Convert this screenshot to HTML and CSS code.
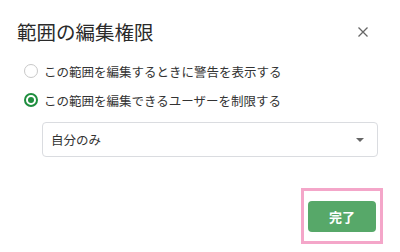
FILE: index.html
```html
<!DOCTYPE html>
<html lang="ja">
<head>
<meta charset="utf-8">
<link rel="stylesheet" href="styles.css">
</head>
<body>
<div class="dialog">
  <div class="header">
    <div class="title">範囲の編集権限</div>
    <svg class="close" width="10" height="10" viewBox="0 0 10 10"><path d="M0.5 0.5L9.5 9.5M9.5 0.5L0.5 9.5" stroke="#666" stroke-width="1.3"/></svg>
  </div>
  <div class="options">
    <label class="option"><span class="radio"></span><span class="label">この範囲を編集するときに警告を表示する</span></label>
    <label class="option"><span class="radio checked"></span><span class="label">この範囲を編集できるユーザーを制限する</span></label>
  </div>
  <div class="select">
    <span class="value">自分のみ</span>
    <span class="caret"></span>
  </div>
  <div class="footer">
    <div class="highlight"><button class="done">完了</button></div>
  </div>
</div>
</body>
</html>
```
FILE: styles.css
```css
html, body { margin: 0; padding: 0; background: #fff; }
body { width: 400px; height: 252px; overflow: hidden; font-family: "Noto Sans CJK JP", "Noto Sans", sans-serif; color: #333; }
.dialog { padding: 0 22px 0 17px; }
.header { display: flex; align-items: center; justify-content: space-between; height: 64px; }
.title { font-size: 19.5px; color: #2a2a2a; line-height: 1; }
.close { margin-right: 10px; }
.options { display: flex; flex-direction: column; gap: 11px; padding-left: 7px; margin-top: -2px; }
.option { display: flex; align-items: center; gap: 6px; font-size: 12.5px; height: 18px; }
.radio { width: 12px; height: 12px; border: 1px solid #c8c8c8; border-radius: 50%; box-sizing: content-box; display: inline-block; position: relative; }
.radio.checked { border: 2px solid #1e8e3e; width: 10px; height: 10px; }
.radio.checked::after { content: ""; position: absolute; left: 2px; top: 2px; width: 6px; height: 6px; border-radius: 50%; background: #1e8e3e; }
.select { margin: 13px 0 0 25px; height: 33px; border: 1px solid #dadce0; border-radius: 4px; display: flex; align-items: center; justify-content: space-between; padding: 0 13px 0 8px; font-size: 12.5px; }
.caret { width: 0; height: 0; border-left: 4px solid transparent; border-right: 4px solid transparent; border-top: 4px solid #666; }
.footer { display: flex; justify-content: flex-end; margin-top: 31px; margin-right: -5px; }
.highlight { border: 3px solid #f4a6c9; padding: 10px 4px 9px 4px; }
.done { width: 68px; height: 31px; background: #57a869; color: #fff; border: none; border-radius: 4px; font-family: "Noto Sans CJK JP", sans-serif; font-size: 13px; font-weight: bold; }
```
